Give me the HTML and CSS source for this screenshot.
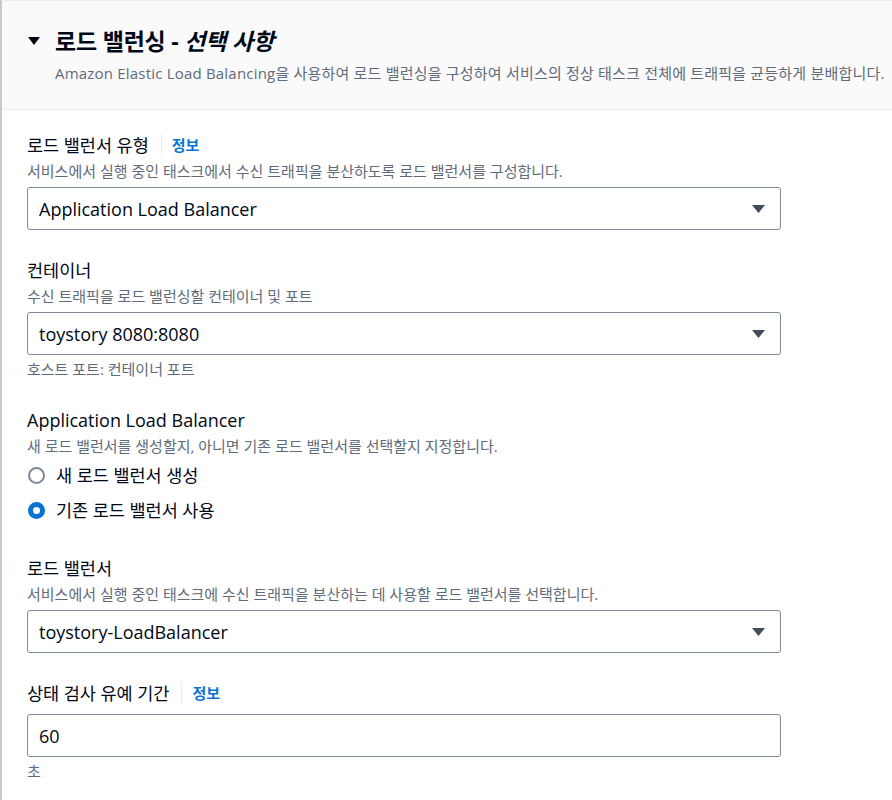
FILE: index.html
```html
<!DOCTYPE html>
<html lang="ko">
<head>
<meta charset="utf-8">
<title>로드 밸런싱</title>
<link rel="stylesheet" href="styles.css">
</head>
<body>
<div class="panel">
  <div class="panel-header">
    <div class="title-row">
      <svg class="expand-caret" width="12" height="8" viewBox="0 0 12 8"><polygon points="0,0 12,0 6,8" fill="#000716"/></svg>
      <h2 class="title">로드 밸런싱 - <em>선택 사항</em></h2>
    </div>
    <p class="header-desc">Amazon Elastic Load Balancing을 사용하여 로드 밸런싱을 구성하여 서비스의 정상 태스크 전체에 트래픽을 균등하게 분배합니다.</p>
  </div>
  <div class="panel-body">
    <div class="field">
      <div class="label-row"><span class="label">로드 밸런서 유형</span><span class="sep"></span><a class="info">정보</a></div>
      <div class="desc">서비스에서 실행 중인 태스크에서 수신 트래픽을 분산하도록 로드 밸런서를 구성합니다.</div>
      <div class="select"><span>Application Load Balancer</span><svg class="caret" width="13" height="8" viewBox="0 0 13 8"><polygon points="0,0 13,0 6.5,8" fill="#414d5c"/></svg></div>
    </div>
    <div class="field">
      <div class="label-row"><span class="label">컨테이너</span></div>
      <div class="desc">수신 트래픽을 로드 밸런싱할 컨테이너 및 포트</div>
      <div class="select"><span>toystory 8080:8080</span><svg class="caret" width="13" height="8" viewBox="0 0 13 8"><polygon points="0,0 13,0 6.5,8" fill="#414d5c"/></svg></div>
      <div class="hint">호스트 포트: 컨테이너 포트</div>
    </div>
    <div class="field">
      <div class="label-row"><span class="label en">Application Load Balancer</span></div>
      <div class="desc">새 로드 밸런서를 생성할지, 아니면 기존 로드 밸런서를 선택할지 지정합니다.</div>
      <div class="radios">
        <div class="radio"><span class="dot"></span><span>새 로드 밸런서 생성</span></div>
        <div class="radio"><span class="dot checked"></span><span>기존 로드 밸런서 사용</span></div>
      </div>
    </div>
    <div class="field">
      <div class="label-row"><span class="label">로드 밸런서</span></div>
      <div class="desc">서비스에서 실행 중인 태스크에 수신 트래픽을 분산하는 데 사용할 로드 밸런서를 선택합니다.</div>
      <div class="select"><span>toystory-LoadBalancer</span><svg class="caret" width="13" height="8" viewBox="0 0 13 8"><polygon points="0,0 13,0 6.5,8" fill="#414d5c"/></svg></div>
    </div>
    <div class="field">
      <div class="label-row"><span class="label">상태 검사 유예 기간</span><span class="sep"></span><a class="info">정보</a></div>
      <div class="select input"><span>60</span></div>
      <div class="hint">초</div>
    </div>
  </div>
</div>
</body>
</html>
```
FILE: styles.css
```css
* { box-sizing: border-box; }
html, body { margin: 0; padding: 0; background: #ffffff; }
body {
  font-family: "Open Sans", "Noto Sans CJK KR", sans-serif;
  color: #000716;
  width: 892px;
  height: 800px;
  overflow: hidden;
}
.panel {
  width: 892px;
  border-left: 2px solid #c6cbd2;
  border-top: 1px solid #e9ebed;
  min-height: 800px;
}
.panel-header {
  background: #fafafa;
  border-bottom: 1px solid #e9ebed;
  height: 109px;
  padding: 25px 0 0 26px;
}
.title-row {
  display: flex;
  align-items: center;
  gap: 15px;
  height: 30px;
}
.expand-caret { flex: none; }
.title {
  margin: 0;
  font-size: 23px;
  font-weight: 700;
  line-height: 30px;
  letter-spacing: -0.2px;
  white-space: nowrap;
}
.title em { font-style: italic; }
.header-desc {
  margin: 6px 0 0 27px;
  font-size: 15px;
  line-height: 22px;
  letter-spacing: 0.2px;
  color: #5f6b7a;
  white-space: nowrap;
}
.panel-body {
  padding: 22px 0 0 25px;
  width: 779px;
  display: flex;
  flex-direction: column;
  gap: 27px;
}
.field { display: flex; flex-direction: column; }
.label-row {
  display: flex;
  align-items: center;
  height: 26px;
}
.label { font-size: 17.5px; line-height: 26px; }
.label.en { font-size: 18px; }
.sep {
  width: 1px;
  height: 22px;
  background: #e9ebed;
  margin: 0 10px 0 12px;
}
.info {
  font-size: 15px;
  font-weight: 700;
  color: #0972d3;
  line-height: 22px;
}
.desc {
  margin-top: 2px;
  font-size: 15px;
  line-height: 22px;
  color: #5f6b7a;
  white-space: nowrap;
}
.select {
  margin-top: 5px;
  height: 43px;
  border: 1px solid #7d8998;
  border-radius: 3px;
  display: flex;
  align-items: center;
  justify-content: space-between;
  padding: 0 15px 0 11px;
  font-size: 18px;
  background: #fff;
}
.select.input { margin-top: 8px; }
.caret { flex: none; margin-top: 1px; }
.hint {
  margin-top: 3px;
  font-size: 15px;
  line-height: 22px;
  color: #5f6b7a;
}
.radios {
  display: flex;
  flex-direction: column;
  gap: 9px;
  margin: 5px 0 5px;
}
.radio {
  display: flex;
  align-items: center;
  gap: 11px;
  font-size: 17.5px;
  line-height: 26px;
}
.dot {
  width: 17px;
  height: 17px;
  border-radius: 50%;
  border: 2px solid #7d8998;
  margin-left: 1px;
  flex: none;
}
.dot.checked {
  border: 5px solid #0972d3;
  background: #fff;
}
```
